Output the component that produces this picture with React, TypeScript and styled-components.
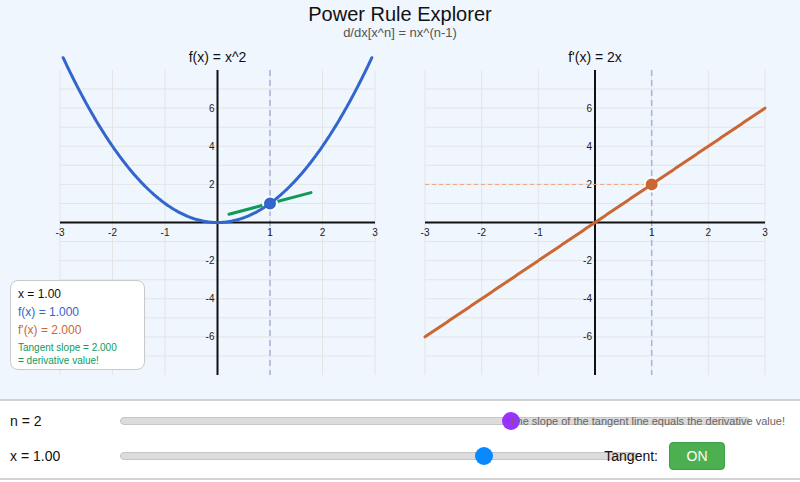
import React, { useState } from "react";
import styled, { createGlobalStyle } from "styled-components";

const GlobalStyle = createGlobalStyle`
  html, body {
    margin: 0;
    padding: 0;
  }
  body {
    font-family: "Liberation Sans", Arial, Helvetica, sans-serif;
    background: #ffffff;
    color: #111;
  }
`;

const BLUE = "#3366cc";
const ORANGE = "#cc6633";
const GREEN = "#109a5a";

// shared plot geometry (page coordinates)
const PLOT_TOP = 70;
const PLOT_BOTTOM = 375;
const Y_MIN = -8;
const Y_MAX = 8;
const X_MIN = -3;
const X_MAX = 3;

const Page = styled.div`
  width: 800px;
  height: 482px;
  display: flex;
  flex-direction: column;
  overflow: hidden;
`;

const Stage = styled.div`
  position: relative;
  height: 399px;
  background: #eff6fe;
  display: flex;
  flex-direction: column;
`;

const Header = styled.header`
  height: 45px;
  padding-top: 3px;
  box-sizing: border-box;
  display: flex;
  flex-direction: column;
  align-items: center;
`;

const Title = styled.h1`
  margin: 0;
  font-size: 20px;
  font-weight: 400;
  line-height: 22px;
  color: #111;
`;

const Formula = styled.div`
  font-size: 13px;
  line-height: 15px;
  color: #555;
`;

const ChartsRow = styled.div`
  display: flex;
  flex: 1;
`;

const ChartSvg = styled.svg`
  display: block;
  width: 400px;
  height: 354px;
  overflow: visible;
`;

const InfoBox = styled.div`
  position: absolute;
  left: 10px;
  top: 280px;
  width: 135px;
  height: 90px;
  box-sizing: border-box;
  padding: 4px 7px;
  background: #ffffff;
  border: 1px solid #c9c9c9;
  border-radius: 8px;
`;

const InfoLine = styled.div<{ $color: string }>`
  font-size: 12px;
  line-height: 18px;
  color: ${(p) => p.$color};
  white-space: nowrap;
`;

const InfoNote = styled.div`
  margin-top: 2px;
  font-size: 10px;
  line-height: 13px;
  color: ${GREEN};
`;

const Controls = styled.div`
  height: 81px;
  box-sizing: border-box;
  padding: 2px 0 5px;
  border-top: 2px solid #d2d2d2;
  border-bottom: 2px solid #d2d2d2;
  background: #ffffff;
  display: flex;
  flex-direction: column;
`;

const Row = styled.div`
  position: relative;
  height: 35px;
  display: flex;
  align-items: center;
  padding-left: 10px;
`;

const Label = styled.span`
  width: 110px;
  font-size: 14px;
  color: #111;
`;

const Slider = styled.input<{ $thumb: string; $gapRight: number }>`
  -webkit-appearance: none;
  appearance: none;
  flex: 1;
  margin: 0 ${(p) => p.$gapRight}px 0 0;
  height: 18px;
  background: transparent;

  &::-webkit-slider-runnable-track {
    height: 8px;
    background: #dcdcdc;
    border: 1px solid #c6c6c6;
    border-radius: 5px;
  }

  &::-webkit-slider-thumb {
    -webkit-appearance: none;
    width: 18px;
    height: 18px;
    margin-top: -6px;
    border: none;
    border-radius: 50%;
    background: ${(p) => p.$thumb};
  }
`;

const Hint = styled.span`
  position: absolute;
  z-index: 2;
  right: 15px;
  top: 50%;
  transform: translateY(-50%);
  font-size: 11px;
  color: #666;
  pointer-events: none;
  white-space: nowrap;
`;

const TangentGroup = styled.div`
  position: absolute;
  right: 75px;
  top: 50%;
  transform: translateY(-50%);
  display: flex;
  align-items: center;
  gap: 11px;
`;

const TangentLabel = styled.span`
  font-size: 14px;
  color: #111;
`;

const ToggleButton = styled.button<{ $on: boolean }>`
  width: 56px;
  height: 28px;
  padding: 0;
  border: 1px solid ${(p) => (p.$on ? "#43a047" : "#999")};
  border-radius: 4px;
  background: ${(p) => (p.$on ? "#4caf50" : "#bbb")};
  color: #ffffff;
  font-family: inherit;
  font-size: 14px;
  cursor: pointer;
`;

type ChartProps = {
  offsetX: number;
  x0: number;
  x1: number;
  title: string;
  fn: (x: number) => number;
  color: string;
  xVal: number;
  children?: (sx: (x: number) => number, sy: (y: number) => number) => React.ReactNode;
};

const range = (a: number, b: number) => {
  const out: number[] = [];
  for (let i = a; i <= b; i++) out.push(i);
  return out;
};

const Chart = ({ offsetX, x0, x1, title, fn, color, xVal, children }: ChartProps) => {
  const sx = (x: number) => x0 + ((x - X_MIN) / (X_MAX - X_MIN)) * (x1 - x0);
  const sy = (y: number) =>
    PLOT_BOTTOM - ((y - Y_MIN) / (Y_MAX - Y_MIN)) * (PLOT_BOTTOM - PLOT_TOP);
  const ax = sx(0);
  const ay = sy(0);

  // curve, broken where it leaves the visible band
  let d = "";
  let pen = false;
  for (let i = 0; i <= 300; i++) {
    const x = X_MIN + (i / 300) * (X_MAX - X_MIN);
    const y = fn(x);
    if (!isFinite(y) || Math.abs(y) > 8.75) {
      pen = false;
      continue;
    }
    d += `${pen ? "L" : "M"}${sx(x).toFixed(2)},${sy(y).toFixed(2)}`;
    pen = true;
  }

  return (
    <ChartSvg viewBox={`${offsetX} 45 400 354`}>
      <text x={ax} y={62} textAnchor="middle" fontSize={14} fill="#111">
        {title}
      </text>
      <g stroke="#e4e4e4" strokeWidth={1}>
        {range(X_MIN, X_MAX).map((i) => (
          <line key={`v${i}`} x1={sx(i)} x2={sx(i)} y1={PLOT_TOP} y2={PLOT_BOTTOM} />
        ))}
        {range(-7, 7).map((j) => (
          <line key={`h${j}`} x1={x0} x2={x1} y1={sy(j)} y2={sy(j)} />
        ))}
      </g>
      <line
        x1={sx(xVal)}
        x2={sx(xVal)}
        y1={PLOT_TOP}
        y2={PLOT_BOTTOM}
        stroke="#aab0dc"
        strokeWidth={1.5}
        strokeDasharray="6 4"
      />
      <g stroke="#111" strokeWidth={2}>
        <line x1={x0} x2={x1} y1={ay} y2={ay} />
        <line x1={ax} x2={ax} y1={PLOT_TOP} y2={PLOT_BOTTOM} />
      </g>
      <g fontSize={10} fill="#222">
        {range(X_MIN, X_MAX)
          .filter((i) => i !== 0)
          .map((i) => (
            <text key={`tx${i}`} x={sx(i)} y={ay + 13} textAnchor="middle">
              {i}
            </text>
          ))}
        {[-6, -4, -2, 2, 4, 6].map((j) => (
          <text key={`ty${j}`} x={ax - 3} y={sy(j) + 3.5} textAnchor="end">
            {j}
          </text>
        ))}
      </g>
      {children && children(sx, sy)}
      <path d={d} fill="none" stroke={color} strokeWidth={3} strokeLinecap="round" />
    </ChartSvg>
  );
};

const fmt = (v: number, digits: number) => (Object.is(v, -0) ? 0 : v).toFixed(digits);

const derivTitle = (n: number) => {
  if (n === 0) return "f'(x) = 0";
  if (n === 1) return "f'(x) = 1";
  if (n === 2) return "f'(x) = 2x";
  return `f'(x) = ${n}x^${n - 1}`;
};

// the tangent is drawn with a fixed half-width in pixels and a flattened slope
const TANGENT_HALF = 41;
const TANGENT_FLATTEN = (19.06 / 52.5) ** 2;

export default function App() {
  const [n, setN] = useState(2);
  const [xVal, setXVal] = useState(1);
  const [tangent, setTangent] = useState(true);

  const f = (x: number) => Math.pow(x, n);
  const fp = (x: number) => (n === 0 ? 0 : n * Math.pow(x, n - 1));
  const fx = f(xVal);
  const slope = fp(xVal);

  return (
    <Page>
      <GlobalStyle />
      <Stage>
        <Header>
          <Title>Power Rule Explorer</Title>
          <Formula>d/dx[x^n] = nx^(n-1)</Formula>
        </Header>
        <ChartsRow>
          <Chart
            offsetX={0}
            x0={60}
            x1={375}
            title={`f(x) = x^${n}`}
            fn={f}
            color={BLUE}
            xVal={xVal}
          >
            {(sx, sy) => {
              const px = sx(xVal);
              const py = sy(fx);
              const dy = slope * TANGENT_HALF * TANGENT_FLATTEN;
              return (
                <>
                  {tangent && (
                    <line
                      x1={px - TANGENT_HALF}
                      y1={py + dy}
                      x2={px + TANGENT_HALF}
                      y2={py - dy}
                      stroke={GREEN}
                      strokeWidth={3}
                      strokeLinecap="round"
                    />
                  )}
                  <circle cx={px} cy={py} r={7} fill={BLUE} stroke="#fff" strokeWidth={2} />
                </>
              );
            }}
          </Chart>
          <Chart
            offsetX={400}
            x0={425}
            x1={765}
            title={derivTitle(n)}
            fn={fp}
            color={ORANGE}
            xVal={xVal}
          >
            {(sx, sy) => (
              <>
                <line
                  x1={425}
                  x2={sx(xVal)}
                  y1={sy(slope)}
                  y2={sy(slope)}
                  stroke="#f0a27a"
                  strokeWidth={1}
                  strokeDasharray="4 3"
                />
                <circle
                  cx={sx(xVal)}
                  cy={sy(slope)}
                  r={7}
                  fill={ORANGE}
                  stroke="#fff"
                  strokeWidth={2}
                />
              </>
            )}
          </Chart>
        </ChartsRow>
        <InfoBox>
          <InfoLine $color="#111">x = {fmt(xVal, 2)}</InfoLine>
          <InfoLine $color={BLUE}>f(x) = {fmt(fx, 3)}</InfoLine>
          <InfoLine $color={ORANGE}>f'(x) = {fmt(slope, 3)}</InfoLine>
          <InfoNote>
            Tangent slope = {fmt(slope, 3)}
            <br />= derivative value!
          </InfoNote>
        </InfoBox>
      </Stage>
      <Controls>
        <Row>
          <Label>n = {n}</Label>
          <Slider
            type="range"
            min={-3}
            max={5}
            step={1}
            value={n}
            $thumb="#9933ff"
            $gapRight={50}
            onChange={(e) => setN(Number(e.target.value))}
          />
          <Hint>The slope of the tangent line equals the derivative value!</Hint>
        </Row>
        <Row>
          <Label>x = {fmt(xVal, 2)}</Label>
          <Slider
            type="range"
            min={-2.5}
            max={2.42}
            step={0.01}
            value={xVal}
            $thumb="#0a88ff"
            $gapRight={162}
            onChange={(e) => setXVal(Number(e.target.value))}
          />
          <TangentGroup>
            <TangentLabel>Tangent:</TangentLabel>
            <ToggleButton $on={tangent} onClick={() => setTangent(!tangent)}>
              {tangent ? "ON" : "OFF"}
            </ToggleButton>
          </TangentGroup>
        </Row>
      </Controls>
    </Page>
  );
}
